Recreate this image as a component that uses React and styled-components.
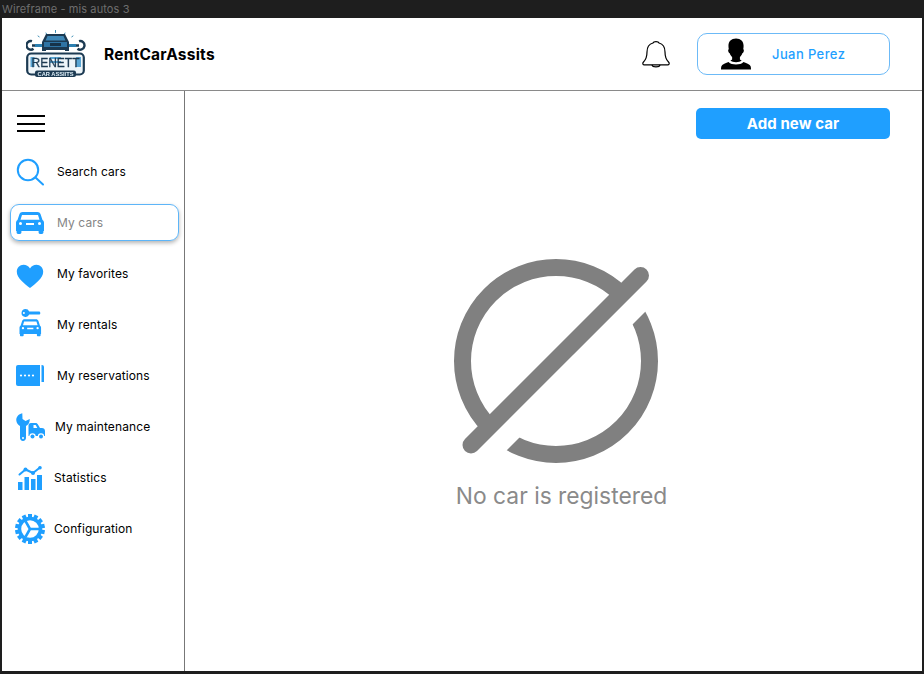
import React from "react";
import styled, { createGlobalStyle } from "styled-components";

const BLUE = "#1f9fff";

const GlobalStyle = createGlobalStyle`
  html, body {
    margin: 0;
    padding: 0;
    background: #1e1e1e;
  }
  * {
    box-sizing: border-box;
  }
`;

//Icons
const CarPath = ({ x = 0, y = 0, s = 1 }) => (
  <g transform={`translate(${x} ${y}) scale(${s})`}>
    <path
      fillRule="evenodd"
      d="M6.5 1h15c1.4 0 2.5.8 3 2l2 6c1 .6 1.5 1.6 1.5 2.8V20h-.6v1.6c0 .8-.6 1.4-1.4 1.4h-2c-.8 0-1.4-.6-1.4-1.4V20H5.4v1.6C5.4 22.4 4.8 23 4 23H2c-.8 0-1.4-.6-1.4-1.4V20H0v-8.2C0 10.6.5 9.6 1.5 9l2-6c.5-1.2 1.6-2 3-2zM6 4 4.5 8.8h19L22 4H6zM3 12.6a1.5 1.5 0 1 0 3 0 1.5 1.5 0 0 0-3 0zm19 0a1.5 1.5 0 1 0 3 0 1.5 1.5 0 0 0-3 0zM10 12v2h8v-2h-8z"
    />
  </g>
);

const SearchIcon = () => (
  <svg width="28" height="28" viewBox="0 0 28 28" fill="none" stroke={BLUE}>
    <circle cx="12" cy="12" r="10.2" strokeWidth="2" />
    <path d="M19.5 19.5 27 26.5" strokeWidth="2" strokeLinecap="round" />
  </svg>
);

const CarIcon = () => (
  <svg width="28" height="23" viewBox="0 0 28 23" fill={BLUE}>
    <CarPath />
  </svg>
);

const HeartIcon = () => (
  <svg width="28" height="29" viewBox="0 0 28 29" fill={BLUE}>
    <path d="M14 29C9 25 .8 19.5.8 12.8.8 8.7 3.8 5.8 7.5 5.8c2.7 0 5 1.3 6.5 3.7 1.5-2.4 3.8-3.7 6.5-3.7 3.7 0 6.7 2.9 6.7 7 0 6.7-8.2 12.2-13.2 16.2z" />
  </svg>
);

const KeyCarIcon = () => (
  <svg width="24" height="31" viewBox="0 0 24 31" fill={BLUE}>
    <path
      fillRule="evenodd"
      d="M7.5 0a4 4 0 0 1 3.7 2.4H21c.8 0 1.3.7 1.3 1.6S21.8 5.6 21 5.6H11.2A4 4 0 1 1 7.5 0zM5.9 3a1 1 0 1 0 0 2 1 1 0 0 0 0-2z"
    />
    <CarPath x={1.5} y={9.5} s={0.77} />
  </svg>
);

const ReservationIcon = () => (
  <svg width="28" height="22" viewBox="0 0 28 22">
    <path fill={BLUE} d="M2 0h22v21H2a2 2 0 0 1-2-2V2a2 2 0 0 1 2-2z" />
    <path fill={BLUE} d="M25.5 0h.5a2 2 0 0 1 2 2v15h-2.5z" />
    <g fill="#fff">
      <circle cx="5" cy="10.5" r="1.1" />
      <circle cx="9" cy="10.5" r="1.1" />
      <circle cx="13" cy="10.5" r="1.1" />
      <circle cx="17" cy="10.5" r="1.1" />
    </g>
  </svg>
);

const MaintenanceIcon = () => (
  <svg width="29" height="28" viewBox="0 0 29 28">
    <path
      fill={BLUE}
      d="M5.5.5C2 1.5 0 4.5.3 7.5c.2 2.5 1.7 4.5 3.7 5.500v12c0 1.500 1.200 3 3 3s3-1.500 3-3V13c2-1 3.700-3 3.800-7l-4.300 2-3-2-.2-5.700z"
    />
    <circle cx="7" cy="25" r="1" fill="#fff" />
    <path
      fill={BLUE}
      d="M12.5 12.5c0-1.400 1-2.500 2.400-2.500h4.600c1 0 1.700.5 2.300 1.300l2.200 3.700H26c1.600 0 3 1.300 3 3V23H12.500z"
    />
    <path fill="#fff" d="M17.5 12h2.200l1.600 3h-3.800z" />
    <circle cx="16.5" cy="23.5" r="3.2" fill="#fff" />
    <circle cx="16.5" cy="23.5" r="2" fill={BLUE} />
    <circle cx="25" cy="23.5" r="3.2" fill="#fff" />
    <circle cx="25" cy="23.5" r="2" fill={BLUE} />
  </svg>
);

const StatsIcon = () => (
  <svg width="24" height="24" viewBox="0 0 24 24">
    <path
      fill="none"
      stroke={BLUE}
      strokeWidth="2"
      strokeLinecap="round"
      strokeLinejoin="round"
      d="M1.5 8.5 7.5 3.5 15 7l7-5.500"
    />
    <g fill={BLUE}>
      <circle cx="7.5" cy="3.5" r="2" />
      <circle cx="15" cy="7" r="2" />
      <circle cx="22" cy="1.8" r="1.8" />
      <rect x="0" y="16" width="4.5" height="8" />
      <rect x="6.5" y="11" width="4.5" height="13" />
      <rect x="13" y="13" width="4.5" height="11" />
      <rect x="19" y="9" width="5" height="15" />
    </g>
  </svg>
);

const GearIcon = () => {
  const teeth = Array.from({ length: 14 }, (_, i) => (i * 360) / 14);
  return (
    <svg width="30" height="30" viewBox="0 0 30 30">
      {teeth.map((deg) => (
        <rect
          key={deg}
          x="13"
          y="0"
          width="4"
          height="5"
          fill={BLUE}
          transform={`rotate(${deg} 15 15)`}
        />
      ))}
      <circle cx="15" cy="15" r="10.5" fill="none" stroke={BLUE} strokeWidth="3.4" />
      <path
        fill="none"
        stroke={BLUE}
        strokeWidth="2.6"
        d="M15 15V6M15 15 7.2 19.5M15 15 22.8 19.5"
        transform="rotate(90 15 15)"
      />
    </svg>
  );
};

const BellIcon = () => (
  <svg width="28" height="28" viewBox="0 0 28 28" fill="none" stroke="#000" strokeWidth="1.2">
    <path
      strokeLinejoin="round"
      d="M11 3c.5-1.800 5.500-1.800 6 0 4 1 6 4.500 6 9 0 5 1.500 8 3.500 10 1 1 1 2.800-.5 2.800H2c-1.500 0-1.500-1.800-.5-2.800 2-2 3.500-5 3.500-10 0-4.500 2-8 6-9z"
    />
    <path d="M10 24.800c.5 2.700 7.500 2.700 8 0" />
  </svg>
);

const AvatarIcon = () => (
  <svg width="30" height="32" viewBox="0 0 31 32" fill="#000">
    <path
      transform="translate(-2.3 0) scale(1.15 1)"
      d="M15.5 0c4.300 0 6.800 3 6.800 7.500 0 1.500-.1 2.500-.3 3.500.6.200.7 1 .4 2.300-.3 1-.6 1.500-1.100 1.600-.5 1.800-1.400 3.300-2.300 4.200v2.500c.3.500.9.800 1.600 1.100-1.200 1.200-3 1.700-5.100 1.700s-3.900-.5-5.100-1.700c.7-.3 1.300-.6 1.600-1.100v-2.500c-.9-.9-1.800-2.400-2.300-4.200-.5-.1-.8-.6-1.100-1.600-.3-1.300-.2-2.100.4-2.300-.2-1-.3-2-.3-3.500C8.700 3 11.200 0 15.500 0z"
    />
    <path d="M7.8 24.200c1.700 1.800 4.500 2.600 7.700 2.600s6-.8 7.700-2.600c3.800 1.300 6.700 2.700 7.400 4.500.3.800.4 2 .4 3.300H0c0-1.300.1-2.500.4-3.300.7-1.800 3.600-3.200 7.400-4.500z" />
  </svg>
);

const EmptyIcon = () => (
  <StyledEmptyIcon width="206" height="206" viewBox="0 0 206 206" fill="none" stroke="#808080" strokeWidth="17">
    <defs>
      <clipPath id="upper-half">
        <polygon points="0,0 206,0 0,206" />
      </clipPath>
      <clipPath id="lower-half">
        <polygon points="212,34 34,212 212,212" />
      </clipPath>
    </defs>
    <circle cx="103" cy="103" r="93.5" clipPath="url(#upper-half)" />
    <circle cx="103" cy="103" r="93.5" clipPath="url(#lower-half)" />
    <path d="M18 187 187.5 17.5" strokeLinecap="round" />
  </StyledEmptyIcon>
);

const Logo = () => (
  <StyledLogo width="60" height="48" viewBox="0 0 60 48">
    <g stroke="#3f8fb5" strokeWidth="1" strokeLinecap="round">
      <path d="M29.5 0v2.5M20 3l.8 1.5M39 3l-.8 1.5M12 6l1.2.8M47 6l-1.2.8" />
    </g>
    <g fill="none" stroke="#1c3a52" strokeWidth="2.4">
      <path d="M6 15.500h10M43 15.500h10" />
      <path d="M6 11.200a4.300 4.300 0 1 0 1.500 7.500M53 11.200a4.300 4.300 0 1 1-1.500 7.500" />
    </g>
    <path fill="#2c7fb0" d="M9 14h8v3H9zM42 14h8v3h-8z" />
    <path fill="#1c3a52" d="M20 4h19l3 6 1 2v9h-4v-1H20v1h-4v-9l1-2z" />
    <path fill="#3f88b8" d="M21.5 6h16l2 4.500h-20z" />
    <path fill="#2f74a4" d="M18 12h23v5H18z" />
    <path fill="#16334a" d="M24 13h11v3H24z" />
    <rect x="1.2" y="23.5" width="56.6" height="21" rx="4" fill="#eef5f9" stroke="#1c3a52" strokeWidth="2.2" />
    <path fill="#5aa6d4" d="M4.5 27h4v10h-4zM24 27h11v2h-11zM24 31h11v2h-11zM50 27h5v10h-5z" />
    <rect x="9" y="40.500" width="41" height="6.500" rx="2" fill="#1c3a52" />
    <LogoWord x="29.5" y="36.500" textAnchor="middle" textLength="48" lengthAdjust="spacingAndGlyphs">
      RENETT
    </LogoWord>
    <LogoTag x="29.5" y="45.500" textAnchor="middle" textLength="36" lengthAdjust="spacingAndGlyphs">
      CAR ASSIITS
    </LogoTag>
  </StyledLogo>
);

const menu = [
  { label: "Search cars", Icon: SearchIcon, gap: 8 },
  { label: "My cars", Icon: CarIcon, gap: 8, active: true },
  { label: "My favorites", Icon: HeartIcon, gap: 8 },
  { label: "My rentals", Icon: KeyCarIcon, gap: 8 },
  { label: "My reservations", Icon: ReservationIcon, gap: 8 },
  { label: "My maintenance", Icon: MaintenanceIcon, gap: 6 },
  { label: "Statistics", Icon: StatsIcon, gap: 5 },
  { label: "Configuration", Icon: GearIcon, gap: 5 },
];

const App = () => {
  return (
    <>
      <GlobalStyle />
      <StyledTitleBar>Wireframe - mis autos 3</StyledTitleBar>
      <StyledFrame>
        <StyledHeader>
          <Logo />
          <StyledBrand>RentCarAssits</StyledBrand>
          <StyledBell>
            <BellIcon />
          </StyledBell>
          <StyledUser>
            <AvatarIcon />
            <span>Juan Perez</span>
          </StyledUser>
        </StyledHeader>
        <StyledBody>
          <StyledSidebar>
            <StyledBurger>
              <span />
              <span />
              <span />
            </StyledBurger>
            <StyledMenu>
              {menu.map(({ label, Icon, gap, active }) => (
                <StyledItem key={label} $active={active}>
                  <StyledSlot $gap={gap}>
                    <Icon />
                  </StyledSlot>
                  {label}
                </StyledItem>
              ))}
            </StyledMenu>
          </StyledSidebar>
          <StyledMain>
            <StyledAddButton>Add new car</StyledAddButton>
            <StyledEmpty>
              <EmptyIcon />
              <StyledEmptyText>No car is registered</StyledEmptyText>
            </StyledEmpty>
          </StyledMain>
        </StyledBody>
      </StyledFrame>
    </>
  );
};

const StyledLogo = styled.svg`
  filter: blur(0.3px);
`;

const LogoWord = styled.text`
  font-family: "Liberation Sans", sans-serif;
  font-size: 13px;
  font-weight: 400;
  fill: #1c3a52;
  stroke: #1c3a52;
  stroke-width: 0.3px;
`;

const LogoTag = styled.text`
  font-family: "Liberation Sans", sans-serif;
  font-size: 5px;
  font-weight: 700;
  fill: #dcecf5;
`;

const StyledTitleBar = styled.div`
  height: 18px;
  padding-left: 2px;
  font-family: "Inter", sans-serif;
  font-size: 11px;
  letter-spacing: 0.1px;
  line-height: 19px;
  color: #6e6e6e;
  background: #1e1e1e;
`;

const StyledFrame = styled.div`
  display: flex;
  flex-direction: column;
  width: 920px;
  height: 653px;
  margin-left: 2px;
  background: #ffffff;
`;

const StyledHeader = styled.header`
  display: flex;
  align-items: center;
  flex: 0 0 73px;
  padding: 0 32px 1px 24px;
  border-bottom: 1px solid #8a8a8a;
`;

const StyledBrand = styled.div`
  margin: 2px 0 0 18px;
  font-family: "Inter", sans-serif;
  font-size: 15.5px;
  font-weight: 700;
  letter-spacing: 0.22px;
  color: #000000;
`;

const StyledBell = styled.div`
  display: flex;
  margin-left: auto;
  margin-right: 27px;
`;

const StyledUser = styled.div`
  display: flex;
  align-items: center;
  width: 193px;
  height: 42px;
  padding-left: 23px;
  border: 1px solid #6cbaf7;
  border-radius: 10px;
  font-family: "Inter", sans-serif;
  font-size: 13px;
  font-weight: 500;
  letter-spacing: 0.4px;
  color: ${BLUE};

  span {
    margin-left: 21px;
  }
`;

const StyledBody = styled.div`
  display: flex;
  flex: 1;
  min-height: 0;
`;

const StyledSidebar = styled.aside`
  flex: 0 0 183px;
  padding-top: 24px;
  border-right: 1px solid #777777;
`;

const StyledBurger = styled.div`
  display: flex;
  flex-direction: column;
  gap: 5.5px;
  width: 28px;
  margin: 0 0 21px 15px;

  span {
    height: 2px;
    background: #000000;
  }
`;

const StyledMenu = styled.nav`
  display: flex;
  flex-direction: column;
  gap: 14px;
  margin: 0 5px 0 8px;
`;

const StyledItem = styled.div`
  display: flex;
  align-items: center;
  height: 37px;
  border: 1px solid ${(p) => (p.$active ? "#5db5f8" : "transparent")};
  border-radius: 9px;
  box-shadow: ${(p) => (p.$active ? "0 2px 4px rgba(0, 0, 0, 0.3)" : "none")};
  font-family: "Inter", sans-serif;
  font-size: 12px;
  font-weight: 400;
  letter-spacing: 0.1px;
  color: ${(p) => (p.$active ? "#858585" : "#000000")};
`;

const StyledSlot = styled.div`
  display: flex;
  justify-content: center;
  flex: 0 0 38px;
  margin-right: ${(p) => p.$gap}px;
`;

const StyledMain = styled.main`
  display: flex;
  flex: 1;
  flex-direction: column;
  padding-top: 17px;
  padding-right: 32px;
`;

const StyledAddButton = styled.button`
  align-self: flex-end;
  width: 194px;
  height: 31px;
  border: none;
  border-radius: 5px;
  background: ${BLUE};
  font-family: "Inter", sans-serif;
  font-size: 15px;
  font-weight: 700;
  letter-spacing: 0.1px;
  color: #ffffff;
`;

const StyledEmpty = styled.div`
  display: flex;
  flex-direction: column;
  align-items: center;
  margin-top: 119px;
  padding-left: 48px;
`;

const StyledEmptyIcon = styled.svg`
  margin-right: 12px;
  filter: blur(0.5px);
`;

const StyledEmptyText = styled.div`
  margin-top: 18px;
  font-family: "Inter", sans-serif;
  font-size: 22.8px;
  line-height: 28px;
  color: #8a8a8a;
`;

export default App;
